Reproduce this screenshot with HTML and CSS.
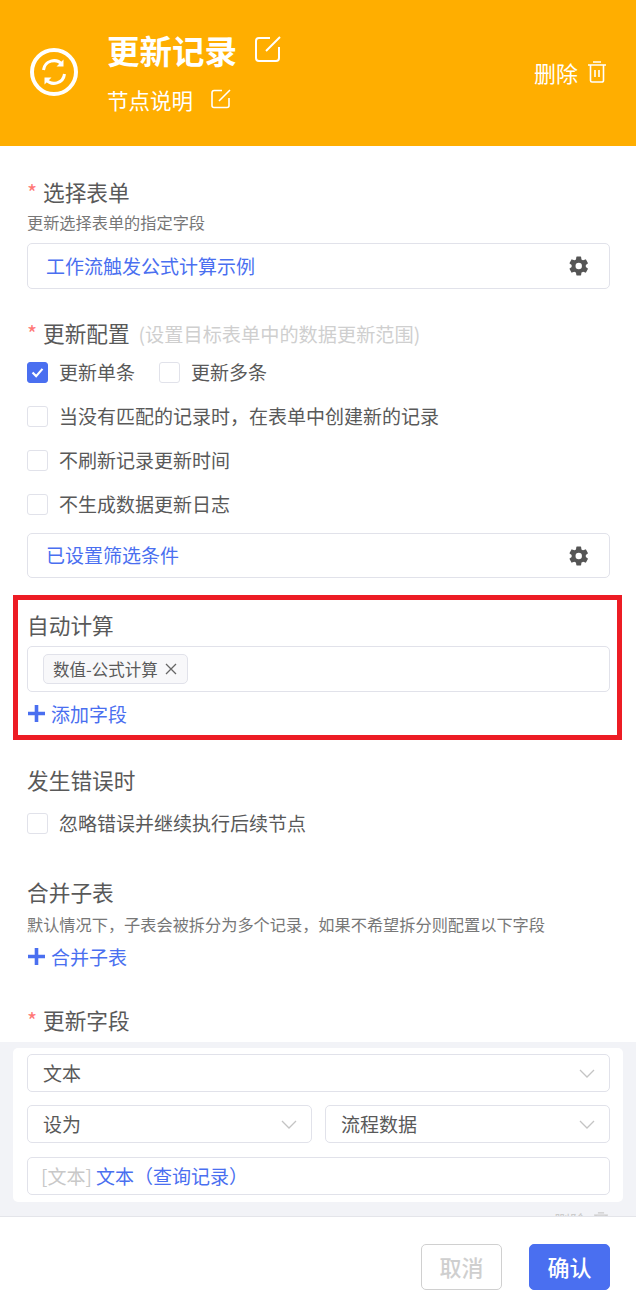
FILE: index.html
```html
<!DOCTYPE html>
<html lang="zh-CN">
<head>
    <meta charset="UTF-8">
    <title>更新记录</title>
    <link rel="stylesheet" href="styles.css">
</head>
<body>
    <header class="node-header">
        <svg class="node-icon" viewBox="0 0 48 48" fill="none" stroke="#fff">
            <circle cx="24" cy="24" r="22" stroke-width="4"/>
            <path d="M13.500 22a10.500 10.500 0 0 1 18.500-5.500" stroke-width="3"/>
            <path d="M34.500 26a10.500 10.500 0 0 1-18.500 5.500" stroke-width="3"/>
            <path d="M33.500 11.500v7h-7zM14.500 36.500v-7h7z" fill="#fff" stroke="none"/>
        </svg>
        <div class="node-titles">
            <div class="node-name">
                <span>更新记录</span>
                <svg class="edit-icon edit-large" viewBox="0 0 26 26" fill="none" stroke="#fff" stroke-width="2">
                    <path d="M15 2H4a3 3 0 0 0-3 3v17a3 3 0 0 0 3 3h17a3 3 0 0 0 3-3V11"/>
                    <path d="M11 15 25 1"/>
                </svg>
            </div>
            <div class="node-desc">
                <span>节点说明</span>
                <svg class="edit-icon edit-small" viewBox="0 0 20 20" fill="none" stroke="#fff" stroke-width="1.600">
                    <path d="M11 1.500H3A2 2 0 0 0 1 3.500v13a2 2 0 0 0 2 2h13a2 2 0 0 0 2-2V9"/>
                    <path d="M8 12 19 1"/>
                </svg>
            </div>
        </div>
        <div class="node-delete">
            <span>删除</span>
            <svg class="trash-icon" viewBox="0 0 18 22" fill="none" stroke="#fff" stroke-width="1.600">
                <path d="M0 4h18M5 1h8M2.500 4v15.500a1.500 1.500 0 0 0 1.500 1.500h10a1.500 1.500 0 0 0 1.500-1.500V4M7 9v7M11 9v7"/>
            </svg>
        </div>
    </header>

    <main class="content">
        <div class="pad">
            <div class="label first"><i>*</i> 选择表单</div>
            <div class="hint">更新选择表单的指定字段</div>
            <div class="field link-field">
                <span>工作流触发公式计算示例</span>
                <svg class="gear" viewBox="0 0 24 24"><path fill-rule="evenodd" fill="#555" d="M19.400 13a7.600 7.600 0 0 0 0-2l2.200-1.700a.5.5 0 0 0 .1-.7l-2.100-3.600a.5.5 0 0 0-.6-.2l-2.600 1a7.700 7.700 0 0 0-1.700-1l-.4-2.700a.5.5 0 0 0-.5-.4h-4.200a.5.5 0 0 0-.5.400l-.4 2.700a7.700 7.700 0 0 0-1.700 1l-2.600-1a.5.5 0 0 0-.6.200L1.700 8.600a.5.5 0 0 0 .1.700L4 11a7.600 7.600 0 0 0 0 2l-2.200 1.700a.5.5 0 0 0-.1.700l2.100 3.600a.5.5 0 0 0 .6.2l2.600-1a7.700 7.700 0 0 0 1.700 1l.4 2.700a.5.5 0 0 0 .5.4h4.200a.5.5 0 0 0 .5-.4l.4-2.700a7.700 7.700 0 0 0 1.700-1l2.600 1a.5.5 0 0 0 .6-.2l2.100-3.600a.5.5 0 0 0-.1-.7zM11.700 15.500a3.500 3.500 0 1 1 0-7 3.500 3.500 0 0 1 0 7z"/></svg>
            </div>

            <div class="label config-label"><i>*</i> 更新配置 <small>(设置目标表单中的数据更新范围)</small></div>
            <div class="check-row inline-checks">
                <label class="check"><span class="box checked"><svg viewBox="0 0 21 21" fill="none" stroke="#fff" stroke-width="2.400"><path d="M5 10.500l4 4 7-8"/></svg></span>更新单条</label>
                <label class="check"><span class="box"></span>更新多条</label>
            </div>
            <div class="check-row"><label class="check"><span class="box"></span>当没有匹配的记录时，在表单中创建新的记录</label></div>
            <div class="check-row"><label class="check"><span class="box"></span>不刷新记录更新时间</label></div>
            <div class="check-row"><label class="check"><span class="box"></span>不生成数据更新日志</label></div>
            <div class="field link-field filter-field">
                <span>已设置筛选条件</span>
                <svg class="gear" viewBox="0 0 24 24"><path fill-rule="evenodd" fill="#555" d="M19.400 13a7.600 7.600 0 0 0 0-2l2.200-1.700a.5.5 0 0 0 .1-.7l-2.100-3.600a.5.5 0 0 0-.6-.2l-2.600 1a7.700 7.700 0 0 0-1.700-1l-.4-2.700a.5.5 0 0 0-.5-.4h-4.200a.5.5 0 0 0-.5.400l-.4 2.700a7.700 7.700 0 0 0-1.700 1l-2.600-1a.5.5 0 0 0-.6.200L1.700 8.600a.5.5 0 0 0 .1.700L4 11a7.600 7.600 0 0 0 0 2l-2.200 1.700a.5.5 0 0 0-.1.700l2.100 3.600a.5.5 0 0 0 .6.2l2.600-1a7.700 7.700 0 0 0 1.700 1l.4 2.700a.5.5 0 0 0 .5.4h4.200a.5.5 0 0 0 .5-.4l.4-2.700a7.700 7.700 0 0 0 1.700-1l2.600 1a.5.5 0 0 0 .6-.2l2.100-3.600a.5.5 0 0 0-.1-.7zM11.700 15.500a3.500 3.500 0 1 1 0-7 3.500 3.500 0 0 1 0 7z"/></svg>
            </div>

            <section class="highlight">
                <div class="label">自动计算</div>
                <div class="field tag-field">
                    <span class="tag">数值-公式计算
                        <svg class="tag-close" viewBox="0 0 12 12" fill="none" stroke="#666" stroke-width="1.300"><path d="M1 1l10 10M11 1 1 11"/></svg>
                    </span>
                </div>
                <div class="add-link">
                    <svg class="plus" viewBox="0 0 17 17" fill="none" stroke="#4a6ff0" stroke-width="3.600"><path d="M8.500 0v17M0 8.500h17"/></svg>添加字段
                </div>
            </section>

            <div class="label error-label">发生错误时</div>
            <div class="check-row error-check"><label class="check"><span class="box"></span>忽略错误并继续执行后续节点</label></div>

            <div class="label merge-label">合并子表</div>
            <div class="hint merge-hint">默认情况下，子表会被拆分为多个记录，如果不希望拆分则配置以下字段</div>
            <div class="add-link merge-add">
                <svg class="plus" viewBox="0 0 17 17" fill="none" stroke="#4a6ff0" stroke-width="3.600"><path d="M8.500 0v17M0 8.500h17"/></svg>合并子表
            </div>

            <div class="label fields-label"><i>*</i> 更新字段</div>
        </div>

        <div class="grey-area">
            <div class="field-card">
                <div class="select">文本<svg class="chev" viewBox="0 0 16 9" fill="none" stroke="#c4c4c4" stroke-width="1.300"><path d="M1 1l7 7 7-7"/></svg></div>
                <div class="select-row">
                    <div class="select">设为<svg class="chev" viewBox="0 0 16 9" fill="none" stroke="#c4c4c4" stroke-width="1.300"><path d="M1 1l7 7 7-7"/></svg></div>
                    <div class="select">流程数据<svg class="chev" viewBox="0 0 16 9" fill="none" stroke="#c4c4c4" stroke-width="1.300"><path d="M1 1l7 7 7-7"/></svg></div>
                </div>
                <div class="select value-box"><span><em>[文本]</em> 文本（查询记录）</span></div>
            </div>
            <div class="card-delete">删除
                <svg class="card-trash" viewBox="0 0 18 22" fill="none" stroke="#ccc" stroke-width="1.600"><path d="M0 4h18M5 1h8M2.500 4v15.500a1.500 1.500 0 0 0 1.500 1.500h10a1.500 1.500 0 0 0 1.500-1.500V4M7 9v7M11 9v7"/></svg>
            </div>
        </div>
    </main>

    <footer class="actions">
        <button class="btn btn-cancel">取消</button>
        <button class="btn btn-ok">确认</button>
    </footer>
</body>
</html>
```

FILE: styles.css
```css
:root {
    --primary-color: #4a6ff0;
    --border-color: #e1e2ea;
    --text-color: #595959;
}
html, body {
    margin: 0;
    height: 100%;
}
body {
    display: flex;
    flex-direction: column;
    height: 1309px;
    overflow: hidden;
    font-family: "Noto Sans CJK SC", "Liberation Sans", sans-serif;
    font-size: 19px;
    color: var(--text-color);
    background-color: white;
}

/* header */
.node-header {
    flex: none;
    height: 146px;
    box-sizing: border-box;
    display: flex;
    align-items: center;
    padding: 0 30px;
    background-color: #ffae00;
    color: white;
}
.node-icon {
    width: 48px;
    height: 48px;
    margin-top: -2px;
    margin-right: 29px;
}
.node-titles {
    flex: 1;
    margin-top: -3px;
}
.node-name {
    display: flex;
    align-items: center;
    height: 40px;
    font-size: 32.500px;
    font-weight: 700;
}
.node-desc {
    display: flex;
    align-items: center;
    height: 30px;
    margin-top: 15px;
    font-size: 21.500px;
}
.edit-large {
    width: 26px;
    height: 26px;
    margin-left: 18px;
}
.edit-small {
    width: 20px;
    height: 20px;
    margin-left: 18px;
}
.node-delete {
    display: flex;
    align-items: center;
    margin-top: -3px;
    font-size: 22px;
}
.trash-icon {
    width: 18px;
    height: 22px;
    margin-left: 10px;
}

/* form */
.content {
    flex: 1;
    min-height: 0;
    overflow: hidden;
}
.pad {
    padding: 0 26px 0 27px;
}
.label {
    height: 30px;
    line-height: 29px;
    font-size: 21.700px;
}
.label i {
    margin-right: 1px;
    color: #ff7875;
    font-style: normal;
}
.label small {
    margin-left: 4px;
    font-size: 19.200px;
    color: #cfcfcf;
}
.label.first {
    margin-top: 31px;
}
.hint {
    height: 24px;
    line-height: 24px;
    margin-top: 3px;
    font-size: 16.200px;
    color: #777;
}
.field {
    box-sizing: border-box;
    height: 46px;
    border: 1px solid var(--border-color);
    border-radius: 5px;
    display: flex;
    align-items: center;
}
.link-field {
    justify-content: space-between;
    margin-top: 9px;
    padding: 0 19px 2px 18px;
    color: var(--primary-color);
}
.gear {
    width: 22px;
    height: 22px;
    margin-top: 2px;
}
.config-label {
    margin-top: 29px;
}
.check-row {
    display: flex;
    align-items: center;
    height: 30px;
    margin-top: 14px;
}
.inline-checks {
    margin-top: 9px;
    gap: 24px;
}
.check {
    display: flex;
    align-items: center;
    gap: 11px;
    padding-bottom: 2px;
}
.box {
    box-sizing: border-box;
    width: 21px;
    height: 21px;
    margin-top: 2px;
    border: 1px solid var(--border-color);
    border-radius: 3px;
    background-color: white;
}
.box.checked {
    border-color: var(--primary-color);
    background-color: var(--primary-color);
}
.box svg {
    display: block;
    width: 19px;
    height: 19px;
}
.filter-field {
    margin-top: 14px;
    height: 45px;
}

/* red annotation round the auto-calc block */
.highlight {
    box-sizing: border-box;
    height: 145px;
    margin: 17px -12px 0 -14px;
    padding: 10px 7px 0 9px;
    border: 5px solid #ed1c24;
}
.tag-field {
    margin-top: 6px;
    padding-left: 15px;
}
.tag {
    display: inline-flex;
    align-items: center;
    box-sizing: border-box;
    height: 30px;
    padding: 0 10px 0 9px;
    border: 1px solid var(--border-color);
    border-radius: 5px;
    background-color: #f8f8fa;
    font-size: 16.500px;
}
.tag-close {
    width: 12px;
    height: 12px;
    margin-left: 7px;
}
.add-link {
    display: flex;
    align-items: center;
    height: 30px;
    margin-top: 6px;
    color: var(--primary-color);
}
.plus {
    width: 17px;
    height: 17px;
    margin-left: 1px;
    margin-right: 6px;
}
.error-label {
    margin-top: 25px;
}
.error-check {
    margin-top: 13px;
}
.merge-label {
    margin-top: 39px;
}
.merge-hint {
    margin-top: 5px;
}
.merge-add {
    margin-top: 5px;
}
.fields-label {
    margin-top: 34px;
}

/* field mapping card */
.grey-area {
    margin-top: 7px;
    padding: 6px 13px 0 13px;
    height: 300px;
    background-color: #f2f3f7;
}
.field-card {
    box-sizing: border-box;
    height: 154px;
    padding: 6px 13px 0 14px;
    border-radius: 5px;
    background-color: white;
}
.select {
    box-sizing: border-box;
    display: flex;
    align-items: center;
    justify-content: space-between;
    height: 38px;
    padding: 0 14px 2px 15px;
    border: 1px solid var(--border-color);
    border-radius: 5px;
}
.chev {
    width: 16px;
    height: 9px;
    margin-top: 2px;
}
.select-row {
    display: grid;
    grid-template-columns: 285px 285px;
    gap: 13px;
    margin-top: 13px;
}
.value-box {
    margin-top: 14px;
    padding-left: 13px;
    color: var(--primary-color);
}
.value-box em {
    font-style: normal;
    color: #c8c8c8;
}
.card-delete {
    display: flex;
    align-items: center;
    justify-content: flex-end;
    margin-top: 7px;
    padding-right: 15px;
    font-size: 16px;
    line-height: 22px;
    color: #ccc;
}
.card-trash {
    width: 14px;
    height: 17px;
    margin-left: 8px;
}

/* footer */
.actions {
    flex: none;
    height: 93px;
    box-sizing: border-box;
    display: flex;
    justify-content: flex-end;
    gap: 27px;
    padding: 27px 26px 0 0;
    border-top: 1px solid #e4e5ea;
    background-color: white;
}
.btn {
    box-sizing: border-box;
    width: 81px;
    height: 46px;
    padding: 0 0 3px;
    border-radius: 5px;
    font-family: inherit;
    font-size: 22px;
    font-weight: 500;
}
.btn-cancel {
    border: 1px solid #d0d0d0;
    background-color: white;
    color: #cfcfcf;
}
.btn-ok {
    border: 1px solid var(--primary-color);
    background-color: var(--primary-color);
    color: white;
}
```
